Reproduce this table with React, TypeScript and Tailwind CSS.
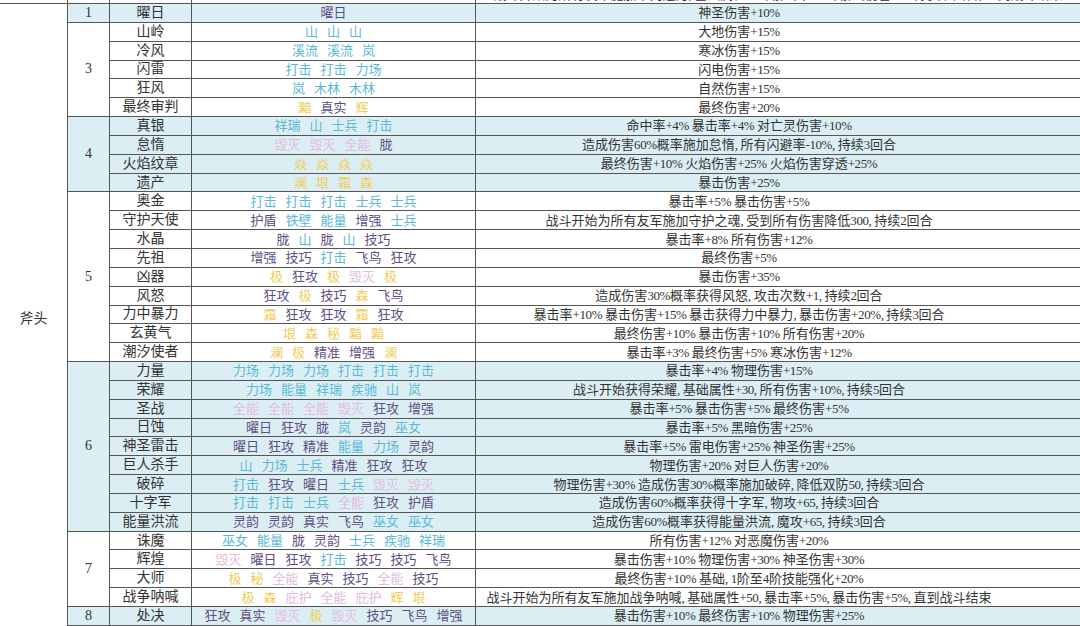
import React from 'react';

type Tone = 'cyan' | 'gold' | 'pink' | 'purple';

const toneOf: Record<string, Tone> = {
  山: 'cyan', 溪流: 'cyan', 岚: 'cyan', 打击: 'cyan', 力场: 'cyan', 木林: 'cyan', 祥瑞: 'cyan',
  士兵: 'cyan', 铁壁: 'cyan', 能量: 'cyan', 疾驰: 'cyan', 巫女: 'cyan',
  黯: 'gold', 辉: 'gold', 焱: 'gold', 澜: 'gold', 垠: 'gold', 森: 'gold', 极: 'gold', 霜: 'gold', 秘: 'gold',
  毁灭: 'pink', 全能: 'pink', 庇护: 'pink',
};

const toneClass: Record<Tone, string> = {
  cyan: 'text-[#5cb9d6]',
  gold: 'text-[#f0cd5c]',
  pink: 'text-[#e4bcdf]',
  purple: 'text-[#5e4f82]',
};

interface Row {
  name: string;
  parts: string;
  effect: string;
}

interface Group {
  n: number;
  blue: boolean;
  rows: Row[];
}

const groups: Group[] = [
  { n: 1, blue: true, rows: [{ name: '曜日', parts: '曜日', effect: '神圣伤害+10%' }] },
  {
    n: 3, blue: false, rows: [
      { name: '山岭', parts: '山 山 山', effect: '大地伤害+15%' },
      { name: '冷风', parts: '溪流 溪流 岚', effect: '寒冰伤害+15%' },
      { name: '闪雷', parts: '打击 打击 力场', effect: '闪电伤害+15%' },
      { name: '狂风', parts: '岚 木林 木林', effect: '自然伤害+15%' },
      { name: '最终审判', parts: '黯 真实 辉', effect: '最终伤害+20%' },
    ],
  },
  {
    n: 4, blue: true, rows: [
      { name: '真银', parts: '祥瑞 山 士兵 打击', effect: '命中率+4% 暴击率+4% 对亡灵伤害+10%' },
      { name: '怠惰', parts: '毁灭 毁灭 全能 胧', effect: '造成伤害60%概率施加怠惰, 所有闪避率-10%, 持续3回合' },
      { name: '火焰纹章', parts: '焱 焱 焱 焱', effect: '最终伤害+10% 火焰伤害+25% 火焰伤害穿透+25%' },
      { name: '遗产', parts: '澜 垠 霜 森', effect: '暴击伤害+25%' },
    ],
  },
  {
    n: 5, blue: false, rows: [
      { name: '奥金', parts: '打击 打击 打击 士兵 士兵', effect: '暴击率+5% 暴击伤害+5%' },
      { name: '守护天使', parts: '护盾 铁壁 能量 增强 士兵', effect: '战斗开始为所有友军施加守护之魂, 受到所有伤害降低300, 持续2回合' },
      { name: '水晶', parts: '胧 山 胧 山 技巧', effect: '暴击率+8% 所有伤害+12%' },
      { name: '先祖', parts: '增强 技巧 打击 飞鸟 狂攻', effect: '最终伤害+5%' },
      { name: '凶器', parts: '极 狂攻 极 毁灭 极', effect: '暴击伤害+35%' },
      { name: '风怒', parts: '狂攻 极 技巧 森 飞鸟', effect: '造成伤害30%概率获得风怒, 攻击次数+1, 持续2回合' },
      { name: '力中暴力', parts: '霜 狂攻 狂攻 霜 狂攻', effect: '暴击率+10% 暴击伤害+15% 暴击获得力中暴力, 暴击伤害+20%, 持续3回合' },
      { name: '玄黄气', parts: '垠 森 秘 黯 黯', effect: '最终伤害+10% 暴击伤害+10% 所有伤害+20%' },
      { name: '潮汐使者', parts: '澜 极 精准 增强 澜', effect: '暴击率+3% 最终伤害+5% 寒冰伤害+12%' },
    ],
  },
  {
    n: 6, blue: true, rows: [
      { name: '力量', parts: '力场 力场 力场 打击 打击 打击', effect: '暴击率+4% 物理伤害+15%' },
      { name: '荣耀', parts: '力场 能量 祥瑞 疾驰 山 岚', effect: '战斗开始获得荣耀, 基础属性+30, 所有伤害+10%, 持续5回合' },
      { name: '圣战', parts: '全能 全能 全能 毁灭 狂攻 增强', effect: '暴击率+5% 暴击伤害+5% 最终伤害+5%' },
      { name: '日蚀', parts: '曜日 狂攻 胧 岚 灵韵 巫女', effect: '暴击率+5% 黑暗伤害+25%' },
      { name: '神圣雷击', parts: '曜日 狂攻 精准 能量 力场 灵韵', effect: '暴击率+5% 雷电伤害+25% 神圣伤害+25%' },
      { name: '巨人杀手', parts: '山 力场 士兵 精准 狂攻 狂攻', effect: '物理伤害+20% 对巨人伤害+20%' },
      { name: '破碎', parts: '打击 狂攻 曜日 士兵 毁灭 毁灭', effect: '物理伤害+30% 造成伤害30%概率施加破碎, 降低双防50, 持续3回合' },
      { name: '十字军', parts: '打击 打击 士兵 全能 狂攻 护盾', effect: '造成伤害60%概率获得十字军, 物攻+65, 持续3回合' },
      { name: '能量洪流', parts: '灵韵 灵韵 真实 飞鸟 巫女 巫女', effect: '造成伤害60%概率获得能量洪流, 魔攻+65, 持续3回合' },
    ],
  },
  {
    n: 7, blue: false, rows: [
      { name: '诛魔', parts: '巫女 能量 胧 灵韵 士兵 疾驰 祥瑞', effect: '所有伤害+12% 对恶魔伤害+20%' },
      { name: '辉煌', parts: '毁灭 曜日 狂攻 打击 技巧 技巧 飞鸟', effect: '暴击伤害+10% 物理伤害+30% 神圣伤害+30%' },
      { name: '大师', parts: '极 秘 全能 真实 技巧 全能 技巧', effect: '最终伤害+10% 基础, 1阶至4阶技能强化+20%' },
      { name: '战争呐喊', parts: '极 森 庇护 全能 庇护 辉 垠', effect: '战斗开始为所有友军施加战争呐喊, 基础属性+50, 暴击率+5%, 暴击伤害+5%, 直到战斗结束' },
    ],
  },
  {
    n: 8, blue: true, rows: [
      { name: '处决', parts: '狂攻 真实 毁灭 极 毁灭 技巧 飞鸟 增强', effect: '暴击伤害+10% 最终伤害+10% 物理伤害+25%' },
    ],
  },
];

const Parts = ({ text }: { text: string }) => (
  <div className="flex items-center justify-center gap-[9px]">
    {text.split(' ').map((w, i) => (
      <span key={i} className={toneClass[toneOf[w] ?? 'purple']}>{w}</span>
    ))}
  </div>
);

// latin runs are set a bit tighter, like the half-width digits of the sheet
const Effect = ({ text }: { text: string }) => (
  <span className="whitespace-pre">
    {text.split(/([\x20-\x7e]+)/).filter(Boolean).map((t, i) =>
      /^[\x20-\x7e]+$/.test(t)
        ? <span key={i} className="tracking-[-0.4px]">{t}</span>
        : <span key={i}>{t}</span>
    )}
  </span>
);

export default function App() {
  return (
    <div
      className="w-[1080px] h-[626px] overflow-hidden bg-white text-[#333] text-[13px] leading-none"
      style={{ fontFamily: '"Liberation Serif", "Noto Sans CJK SC", serif' }}
    >
      <div className="mt-[-15px]">
        {/* row cut off at the top */}
        <div className="flex h-[19px] border-b border-[#555]">
          <div className="w-[68px] border-r border-[#555]" />
          <div className="w-[42px] border-r border-[#555]" />
          <div className="w-[82px] border-r border-[#555] flex items-center justify-center text-[14px]">战争审判</div>
          <div className="w-[284px] border-r border-[#555]" />
          <div className="flex-1 flex items-center justify-center">
            <Effect text="战斗开始为所有友军施加审判之力, 基础属性+50, 暴击率+5%, 暴击伤害+5%, 持续3回合, 直到战斗结束" />
          </div>
        </div>

        <div className="flex">
          <div className="w-[68px] shrink-0 border-r border-[#555] flex items-center justify-center pt-[8px] text-[14px]">
            斧头
          </div>
          <div className="flex-1 flex flex-col">
            {groups.map((g) => (
              <div key={g.n} className={`flex ${g.blue ? 'bg-[#dbeef4]' : 'bg-white'}`}>
                <div className="w-[42px] shrink-0 border-r border-b border-[#555] flex items-center justify-center text-[14px]">
                  {g.n}
                </div>
                <div className="flex-1 flex flex-col">
                  {g.rows.map((r) => (
                    <div key={r.name} className="flex h-[18.85px] border-b border-[#555]">
                      <div className="w-[82px] shrink-0 border-r border-[#555] flex items-center justify-center text-[14px]">
                        {r.name}
                      </div>
                      <div className="w-[284px] shrink-0 border-r border-[#555] flex items-center justify-center">
                        <Parts text={r.parts} />
                      </div>
                      <div className="flex-1 flex items-center justify-center pr-[78px]">
                        <Effect text={r.effect} />
                      </div>
                    </div>
                  ))}
                </div>
              </div>
            ))}
          </div>
        </div>
      </div>
    </div>
  );
}
